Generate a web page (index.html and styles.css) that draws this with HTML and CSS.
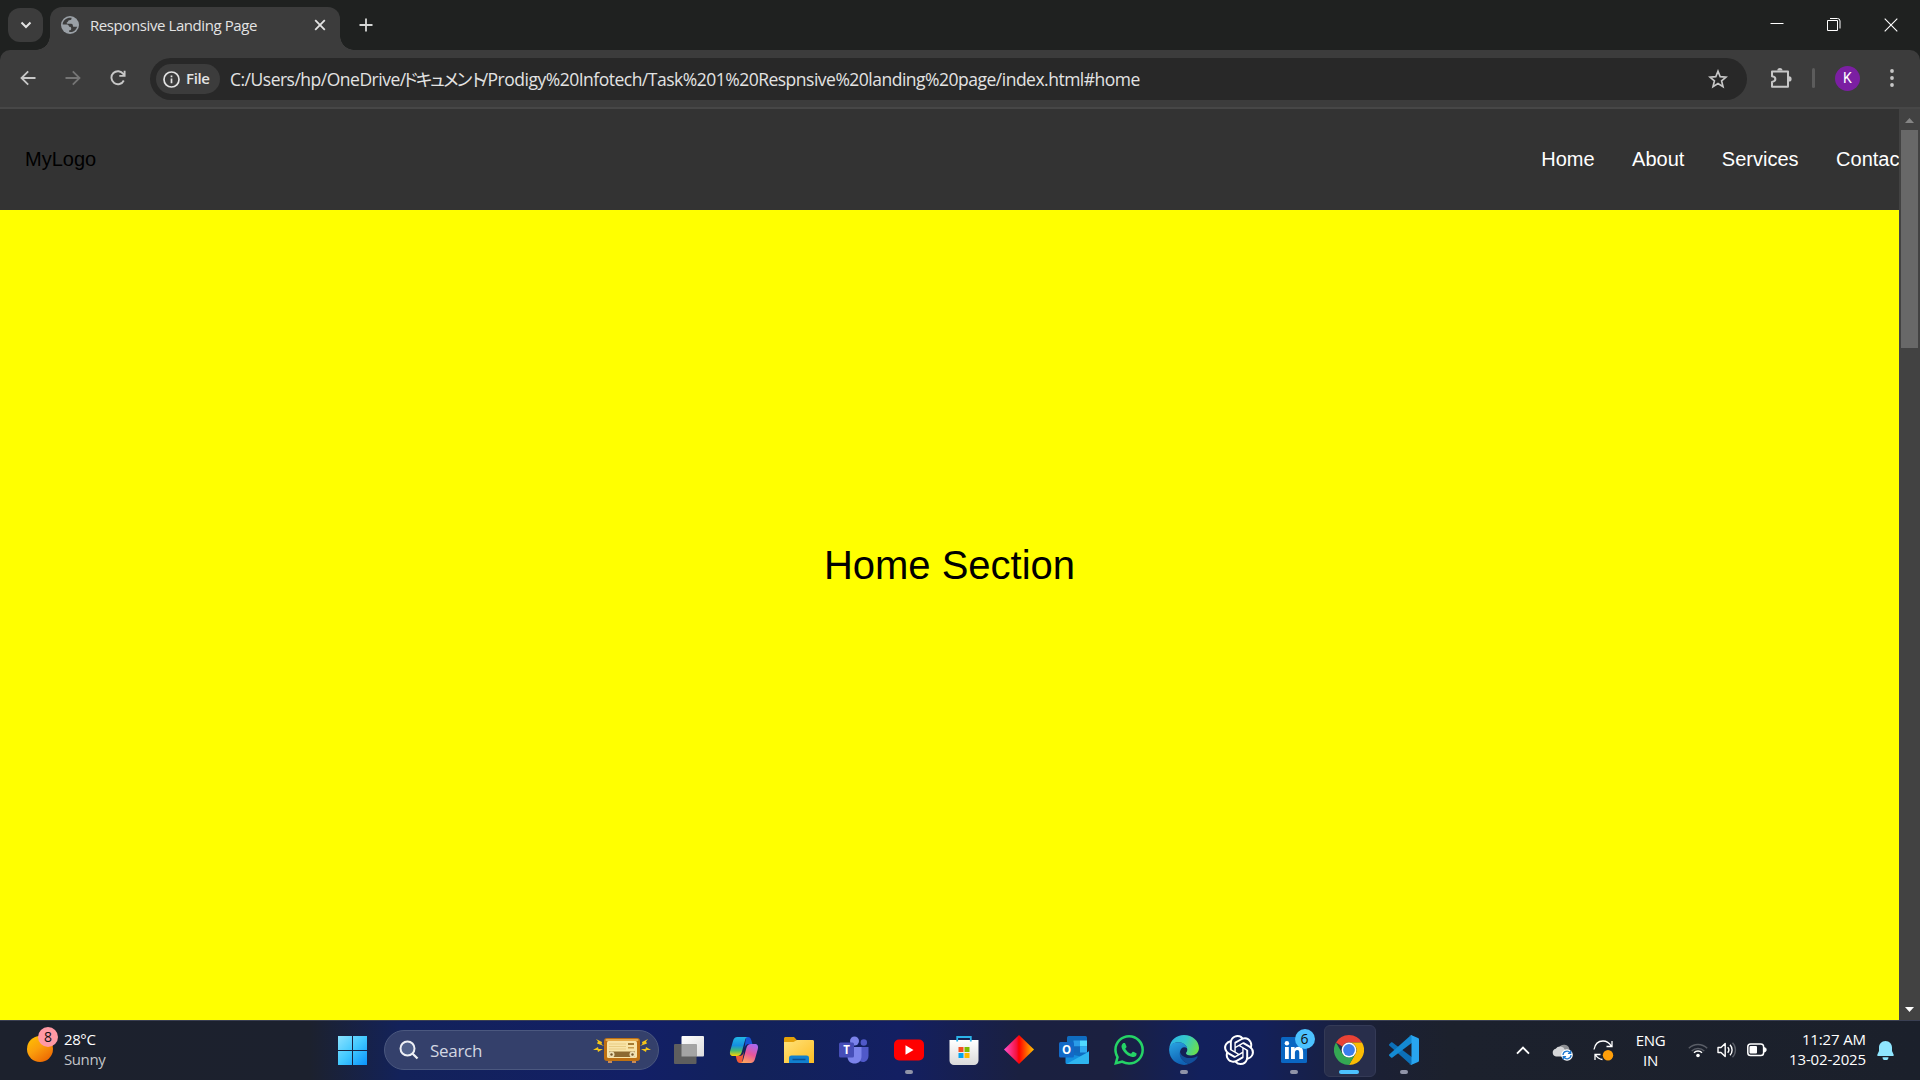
FILE: index.html
```
<!DOCTYPE html>
<html lang="en">
<head>
<meta charset="utf-8">
<title>Responsive Landing Page</title>
<link rel="stylesheet" href="styles.css">
</head>
<body>
<div class="tabstrip">
  <div class="tab-search"><svg width="12" height="8" viewBox="0 0 12 8"><path d="M1.5 1.5 6 6l4.500-4.500" fill="none" stroke="#e3e3e3" stroke-width="2"/></svg></div>
  <div class="tab">
    <svg class="globe" width="18" height="18" viewBox="0 0 18 18"><circle cx="9" cy="9" r="9" fill="#9aa0a6"/><path d="M10.500 1.800C10.800 3.600 9.800 4.200 8.300 4.300 6.900 4.400 7.200 6 6.300 6.300c-1 .3-.8 1.400.2 1.500h3.700c1.400 0 1.700 1 1.700 2.100 0 .8.900.8 1.700.8h2.600c-.6 2.200-2.300 4.200-4.500 5-1.200.4-2.400.5-3.500.3v-1.700c1.500 0 2-.5 2-1.800 0-1.300-1-1.700-2-1.700-.5-1.600-1.200-2.200-2.800-2.200H1.700C1.500 5.500 4 2.700 7 1.900c1.200-.3 2.400-.3 3.500-.1z" fill="#3c3c3c"/></svg>
    <span class="tab-title">Responsive Landing Page</span>
    <svg class="tab-close" width="12" height="12" viewBox="0 0 12 12"><path d="M1.200 1.200l9.600 9.600M10.800 1.200l-9.600 9.600" stroke="#e3e3e3" stroke-width="1.800"/></svg>
  </div>
  <svg class="tab-new" width="14" height="14" viewBox="0 0 14 14"><path d="M7 .5v13M.5 7h13" stroke="#d5d7d6" stroke-width="1.800"/></svg>
  <div class="window-buttons">
    <svg width="14" height="14" viewBox="0 0 14 14"><path d="M.5 5.500h13" stroke="#fff"/></svg>
    <svg width="14" height="14" viewBox="0 0 14 14"><path d="M.5 2.500h10v10H.5zM3 .5h7.500a2.500 2.500 0 0 1 2.500 2.500v7.500" fill="none" stroke="#fff"/></svg>
    <svg width="14" height="14" viewBox="0 0 14 14"><path d="M.7.7l12.600 12.600M13.300.7.7 13.300" stroke="#fff" stroke-width="1.100"/></svg>
  </div>
</div>

<div class="toolbar">
  <svg class="nav-icon" width="16" height="16" viewBox="0 0 16 16"><path d="M15.500 8H1.800M8.200 1.300 1.500 8l6.700 6.700" fill="none" stroke="#c7c7c7" stroke-width="1.800"/></svg>
  <svg class="nav-icon" width="16" height="16" viewBox="0 0 16 16"><path d="M.5 8h13.700M7.800 1.300 14.500 8l-6.700 6.700" fill="none" stroke="#757575" stroke-width="1.800"/></svg>
  <svg class="nav-icon" width="16" height="16" viewBox="0 0 16 16"><path d="M13.800 10.500A6.500 6.500 0 1 1 13.300 4l1 1.500M14.600.7v5.200H9.300" fill="none" stroke="#c7c7c7" stroke-width="1.900"/></svg>
  <div class="omnibox">
    <div class="chip">
      <svg width="17" height="17" viewBox="0 0 17 17"><circle cx="8.500" cy="8.500" r="7.500" fill="none" stroke="#e3e3e3" stroke-width="1.700"/><path d="M8.500 7.500v4.700M8.500 4.400v1.800" stroke="#e3e3e3" stroke-width="1.700"/></svg>
      <span>File</span>
    </div>
    <span class="url">C:/Users/hp/OneDrive/<span class="kana">ドキュメント</span>/Prodigy%20Infotech/Task%201%20Respnsive%20landing%20page/index.html#home</span>
    <svg class="star" width="20" height="20" viewBox="0 0 20 20"><path d="M10 2.200l2.200 5.500 5.900.4-4.500 3.800 1.400 5.700-5-3.100-5 3.100 1.400-5.700L1.900 8.100l5.900-.4z" fill="none" stroke="#c7c7c7" stroke-width="1.700"/></svg>
  </div>
  <svg class="ext" width="22" height="22" viewBox="0 0 22 22"><path d="M2 4.500h16v15.300H2v-4.900c4.500-.6 4.500-5 0-5.600z" fill="none" stroke="#c7c7c7" stroke-width="2" stroke-linejoin="round"/><path d="M7.300 3.500a2.600 2.600 0 0 1 5.200 0zM19 9.300a2.600 2.600 0 0 1 0 5.200z" fill="#c7c7c7"/></svg>
  <span class="separator"></span>
  <span class="avatar">K</span>
  <svg class="menu" width="4" height="18" viewBox="0 0 4 18"><g fill="#c7c7c7"><circle cx="2" cy="2" r="1.900"/><circle cx="2" cy="9" r="1.900"/><circle cx="2" cy="16" r="1.900"/></g></svg>
</div>

<div class="viewport">
  <div class="page">
    <header class="site-header">
      <div class="logo">MyLogo</div>
      <nav class="site-nav"><a>Home</a><a>About</a><a>Services</a><a>Contact</a></nav>
    </header>
    <section class="home">Home Section</section>
  </div>
  <div class="scrollbar">
    <svg class="arrow" width="9" height="5" viewBox="0 0 9 5"><path d="M0 5 4.500 0 9 5z" fill="#858585"/></svg>
    <div class="thumb"></div>
    <svg class="arrow" width="9" height="5" viewBox="0 0 9 5"><path d="M0 0h9L4.500 5z" fill="#fff"/></svg>
  </div>
</div>

<div class="taskbar">
  <div class="weather">
    <div class="sun"><span class="sun-badge">8</span></div>
    <div class="weather-text"><span>28°C</span><span class="dim">Sunny</span></div>
  </div>
  <svg class="start" width="29" height="29" viewBox="0 0 29 29"><defs><linearGradient id="win" x1="0" y1="0" x2="29" y2="29" gradientUnits="userSpaceOnUse"><stop stop-color="#8be2ff"/><stop offset=".5" stop-color="#41c8ff"/><stop offset="1" stop-color="#0a92fb"/></linearGradient></defs><path d="M0 0h14v14H0zM15 0h14v14H15zM0 15h14v14H0zM15 15h14v14H15z" fill="url(#win)"/></svg>
  <div class="search">
    <svg width="20" height="20" viewBox="0 0 20 20"><circle cx="8.500" cy="8.500" r="7" fill="#51618a" stroke="#eef0f5" stroke-width="2"/><path d="M13.700 13.700l4.800 4.800" stroke="#eef0f5" stroke-width="2.300"/></svg>
    <span class="search-label">Search</span>
    <svg class="radio" width="58" height="26" viewBox="0 0 58 26"><g fill="#f5c518"><path d="M3 2l6 3-.5 2L11 9 4 6.500l1-2zM0 13l5-3 .5 2L10 12l-5 3-.5-2zM55 2l-6 3 .5 2L47 9l7-2.500-1-2zM58 13l-5-3-.5 2-4.500 0 5 3 .5-2z"/></g><rect x="15" y="23" width="4" height="3" fill="#c88a58"/><rect x="39" y="23" width="4" height="3" fill="#c88a58"/><rect x="11" y="1" width="36" height="23" rx="3" fill="#bd7013"/><rect x="12.500" y="2" width="33" height="2" rx="1" fill="#e6ab4b"/><rect x="14" y="4" width="30" height="17" rx="1.500" fill="#f8e4a8"/><path d="M16 7h17M16 9.500h17M16 12h17" stroke="#e8cc84"/><rect x="35" y="6" width="6" height="2" fill="#a47b32"/><rect x="35" y="10" width="6" height="1.500" fill="#c99d4e"/><path d="M16 14.500h26V20H16z" fill="#8c6a32"/><circle cx="18.500" cy="17.500" r="3" fill="#eee0b6"/><circle cx="39.500" cy="17.500" r="3" fill="#eee0b6"/><circle cx="18.500" cy="17.500" r="1.200" fill="#76582b"/><circle cx="39.500" cy="17.500" r="1.200" fill="#76582b"/></svg>
  </div>
  <div class="apps">
    <div class="app"><svg viewBox="0 0 30 30"><defs><linearGradient id="tv" x1="0" y1="0" x2="1" y2="1"><stop stop-color="#fff"/><stop offset="1" stop-color="#dcdcdc"/></linearGradient></defs><rect x="7.500" y="1" width="22.500" height="20.500" rx="1" fill="url(#tv)"/><rect y="9" width="22.500" height="20" rx="1" fill="#5e5e5e"/><path d="M7.500 9h15v12.500h-15z" fill="#a4a4a4"/></svg></div>
    <div class="app"><svg viewBox="0 0 30 30"><defs><linearGradient id="ca" x1="0" y1="0" x2="0" y2="1"><stop stop-color="#22b7e5"/><stop offset=".45" stop-color="#158fe0"/><stop offset=".72" stop-color="#45bb72"/><stop offset="1" stop-color="#ffd400"/></linearGradient><linearGradient id="cb" x1=".7" y1="0" x2=".3" y2="1"><stop stop-color="#a768f0"/><stop offset=".5" stop-color="#e8569a"/><stop offset="1" stop-color="#ffa45c"/></linearGradient></defs><path d="M17 2h2c2 0 2.800 1.500 3.400 3.500l1 3.500H20c-3 0-3.500 1.500-4.500 4.500z" fill="#1554d8"/><path d="M13 28h-2c-2 0-2.800-1.500-3.400-3.500L6.800 21H10c3 0 4-1.500 5-4.500z" fill="#f05a38"/><path d="M8.500 2H19c-2 0-2.500 1.500-3.200 4l-3 11c-.8 2.700-2 4-5 4H4C1 21 .4 18.500 1.300 15.500L4 6c.8-2.700 2-4 4.500-4z" fill="url(#ca)"/><path d="M21.500 28H11c2 0 2.700-1.500 3.400-4l3-11c.8-2.700 2-4 4.600-4h4c3 0 3.500 2.500 2.700 5.500L26 24c-.8 2.700-2 4-4.500 4z" fill="url(#cb)"/></svg></div>
    <div class="app"><svg viewBox="0 0 30 30"><defs><linearGradient id="fo" x1="0" y1="0" x2="1" y2="1"><stop stop-color="#ffe27a"/><stop offset="1" stop-color="#fdbd23"/></linearGradient></defs><path d="M0 3.500C0 2.500.8 2 1.500 2H10l3 3.200V9H0z" fill="#e3a008"/><path d="M0 7h9.500L13 5h15.500c1 0 1.500.6 1.500 1.500V28H0z" fill="url(#fo)"/><path d="M5 28v-5c0-1.700 1-2.500 2.500-2.500h15c1.500 0 2.500.8 2.500 2.500v5z" fill="#1180cf"/><path d="M8.500 24.500h13" stroke="#0a4f91" stroke-width="1.500"/></svg></div>
    <div class="app"><svg viewBox="0 0 30 30"><circle cx="15.500" cy="6" r="4.500" fill="#7b83eb"/><circle cx="24.800" cy="7.500" r="3.200" fill="#5059c9"/><path d="M20 12h9.500v8.500c0 4-2.500 6.500-5.500 6.500-2 0-4-1-4-4z" fill="#5059c9"/><path d="M8.500 12h14v9c0 5-3 7.500-7 7.500s-7-2.500-7-7z" fill="#7b83eb"/><rect y="7.500" width="15" height="15" rx="1.500" fill="#464eb8"/><text x="7.500" y="19.200" text-anchor="middle" font-family="Open Sans,sans-serif" font-size="11.500" font-weight="700" fill="#fff">T</text></svg></div>
    <div class="app running"><svg viewBox="0 0 30 30"><rect y="4.500" width="30" height="21" rx="5" fill="#f00"/><path d="M11.500 10.200v9.600l8-4.800z" fill="#fff"/></svg></div>
    <div class="app"><svg viewBox="0 0 30 30"><defs><linearGradient id="st" x1="0" y1="0" x2="0" y2="1"><stop stop-color="#fff"/><stop offset="1" stop-color="#dadada"/></linearGradient></defs><path d="M.5 5h29v20.500a4.500 4.500 0 0 1-4.500 4.500H5a4.500 4.500 0 0 1-4.500-4.500z" fill="url(#st)"/><path d="M8.200 6.500V2h13.600v4.500" fill="none" stroke="#2bb3ea" stroke-width="1.800"/><path d="M9.500 12h5v5h-5z" fill="#f25022"/><path d="M15.500 12h5v5h-5z" fill="#7fba00"/><path d="M9.500 18h5v5h-5z" fill="#00a4ef"/><path d="M15.500 18h5v5h-5z" fill="#ffb900"/></svg></div>
    <div class="app"><svg viewBox="0 0 30 30"><defs><linearGradient id="di"><stop stop-color="#ff4fd0"/><stop offset=".42" stop-color="#f5123c"/><stop offset=".5" stop-color="#f00"/><stop offset="1" stop-color="#ffc400"/></linearGradient></defs><path d="M15 0l15 14.500L15 29 0 14.500z" fill="url(#di)"/></svg></div>
    <div class="app"><svg viewBox="0 0 30 30"><rect x="8" y="1" width="20" height="21" rx="1.500" fill="#0f6cc0"/><path d="M14.500 5.500H21v6h-6.500z" fill="#2a9ce8"/><path d="M21 5.500h7v6h-7z" fill="#50d9ff"/><path d="M14.500 11.500H21v6h-6.500z" fill="#1168bd"/><path d="M21 11.500h7v6h-7z" fill="#30aaf0"/><path d="M6.500 18l17 4L30 16v11.500a1.500 1.500 0 0 1-1.500 1.500H8a1.500 1.500 0 0 1-1.500-1.500z" fill="#1490df"/><path d="M30 16.500 7.500 29H28.500a1.500 1.500 0 0 0 1.500-1.500z" fill="#2fb5ef"/><rect y="7" width="15" height="15.500" rx="1.500" fill="#1269c7"/><text x="7.500" y="19" text-anchor="middle" font-family="Open Sans,sans-serif" font-size="11.500" font-weight="700" fill="#fff">O</text></svg></div>
    <div class="app"><svg viewBox="0 0 24 24"><path fill="#25d366" d="M17.472 14.382c-.297-.149-1.758-.867-2.030-.967-.273-.099-.471-.148-.670.150-.197.297-.767.966-.940 1.164-.173.199-.347.223-.644.075-.297-.150-1.255-.463-2.390-1.475-.883-.788-1.480-1.761-1.653-2.059-.173-.297-.018-.458.130-.606.134-.133.298-.347.446-.520.149-.174.198-.298.298-.497.099-.198.050-.371-.025-.520-.075-.149-.669-1.612-.916-2.207-.242-.579-.487-.500-.669-.510-.173-.008-.371-.010-.570-.010-.198 0-.520.074-.792.372-.272.297-1.040 1.016-1.040 2.479 0 1.462 1.065 2.875 1.213 3.074.149.198 2.096 3.200 5.077 4.487.709.306 1.262.489 1.694.625.712.227 1.360.195 1.871.118.571-.085 1.758-.719 2.006-1.413.248-.694.248-1.289.173-1.413-.074-.124-.272-.198-.570-.347m-5.421 7.403h-.004a9.870 9.870 0 0 1-5.031-1.378l-.361-.214-3.741.982.998-3.648-.235-.374a9.860 9.860 0 0 1-1.510-5.260c.001-5.450 4.436-9.884 9.888-9.884 2.640 0 5.122 1.030 6.988 2.898a9.825 9.825 0 0 1 2.893 6.994c-.003 5.450-4.437 9.884-9.885 9.884m8.413-18.297A11.815 11.815 0 0 0 12.050 0C5.495 0 .160 5.335.157 11.892c0 2.096.547 4.142 1.588 5.945L.057 24l6.305-1.654a11.882 11.882 0 0 0 5.683 1.448h.005c6.554 0 11.890-5.335 11.893-11.893a11.821 11.821 0 0 0-3.480-8.413z"/></svg></div>
    <div class="app running"><svg viewBox="0 0 30 30"><defs><linearGradient id="ea" x1="0" y1=".3" x2="1" y2=".6"><stop stop-color="#2cb4e8"/><stop offset=".5" stop-color="#35c8c8"/><stop offset="1" stop-color="#6be04a"/></linearGradient><linearGradient id="eb" x1="0" y1="0" x2=".4" y2="1"><stop stop-color="#2aa6e4"/><stop offset="1" stop-color="#0f62b4"/></linearGradient></defs><path d="M.3 13C1.300 5 7.500 0 15 0c8.500 0 15 6 15 13 0 4.500-3.500 7.500-8 7.500-3.500 0-5-1.300-5-2.300 0-.7 1.300-1.300 1.300-3.400C18.300 10.500 14 7.300 9 7.300c-4 0-7 2.300-8.700 5.700z" fill="url(#ea)"/><path d="M.1 15C0 10.500 4 7 9.500 7.200c5 .1 8.300 3 8.800 6.300-3-2.600-6.800-1-7.300 3.500-.5 6.500 5 11.500 9.500 11.800C12 32.500.3 26.500.1 15z" fill="url(#eb)"/><path d="M11 16.500c-2 7 5.500 12 9.500 12.300 3.700-1.300 6.600-3.700 8-6.500.4-.8-.2-1.200-.9-.8C20.500 25 12 22.500 11 16.500z" fill="#124f9b"/></svg></div>
    <div class="app"><svg viewBox="0 0 24 24"><path fill="#fff" d="M22.282 9.821a5.985 5.985 0 0 0-.516-4.911 6.046 6.046 0 0 0-6.510-2.900A6.065 6.065 0 0 0 4.981 4.182a5.985 5.985 0 0 0-3.998 2.900 6.046 6.046 0 0 0 .743 7.097 5.980 5.980 0 0 0 .511 4.911 6.051 6.051 0 0 0 6.515 2.900A5.985 5.985 0 0 0 13.260 24a6.056 6.056 0 0 0 5.772-4.206 5.990 5.990 0 0 0 3.998-2.900 6.056 6.056 0 0 0-.748-7.073zM13.260 22.430a4.476 4.476 0 0 1-2.876-1.041l.142-.080 4.778-2.758a.795.795 0 0 0 .393-.681v-6.737l2.020 1.169a.071.071 0 0 1 .038.052v5.583a4.504 4.504 0 0 1-4.495 4.493zM3.600 18.304a4.471 4.471 0 0 1-.535-3.014l.142.085 4.783 2.759a.771.771 0 0 0 .781 0l5.843-3.369v2.332a.080.080 0 0 1-.033.062L9.740 19.950a4.499 4.499 0 0 1-6.140-1.646zM2.341 7.896a4.485 4.485 0 0 1 2.365-1.973V11.600a.766.766 0 0 0 .388.677l5.815 3.354-2.021 1.169a.076.076 0 0 1-.071 0l-4.830-2.787A4.504 4.504 0 0 1 2.341 7.872zm16.596 3.856l-5.833-3.387L15.119 7.200a.076.076 0 0 1 .071 0l4.830 2.791a4.494 4.494 0 0 1-.676 8.105v-5.678a.790.790 0 0 0-.407-.667zm2.011-3.024l-.142-.085-4.774-2.782a.776.776 0 0 0-.785 0L9.409 9.230V6.897a.066.066 0 0 1 .028-.061l4.830-2.787a4.499 4.499 0 0 1 6.681 4.660zM8.307 12.863l-2.020-1.164a.080.080 0 0 1-.038-.057V6.074a4.499 4.499 0 0 1 7.376-3.453l-.142.080-4.778 2.758a.795.795 0 0 0-.393.682zm1.097-2.365L12.006 8.998l2.607 1.500v2.999l-2.597 1.500-2.607-1.500z"/></svg></div>
    <div class="app running"><svg viewBox="0 0 30 30"><rect x="2" y="2" width="26" height="26" rx="1.500" fill="#0a66c2"/><path d="M6 12h3.800v12H6zM12 12h3.600v1.700c.7-1.200 2-2 3.800-2 3.800 0 4.700 2.300 4.700 5.700V24h-3.800v-5.900c0-1.600-.1-3.100-2-3.100-2 0-2.400 1.500-2.400 3.100V24H12z" fill="#fff"/><circle cx="7.900" cy="8.200" r="2.200" fill="#fff"/></svg><span class="app-badge">6</span></div>
    <div class="app running active"><svg viewBox="0 0 30 30"><path d="M15 0a15 15 0 0 1 13 7.500H15A7.500 7.500 0 0 0 8.300 11.600L2 7.500A15 15 0 0 1 15 0z" fill="#e94235"/><path d="M28 7.500A15 15 0 0 1 15 30l6.500-11.200A7.500 7.500 0 0 0 15 7.500z" fill="#fbbc04"/><path d="M15 30A15 15 0 0 1 2 7.500l6.500 11.250A7.500 7.500 0 0 0 21.500 18.750z" fill="#34a853"/><circle cx="15" cy="15" r="7.400" fill="#fff"/><circle cx="15" cy="15" r="5.900" fill="#3b7ded"/></svg></div>
    <div class="app running"><svg viewBox="0 0 30 30"><path d="M0 9.500l2-2c.5-.5 1-.4 1.500 0L23 22.300V29.500L21 29 .2 10.500C-.1 10.100-.1 9.800 0 9.500z" fill="#0c70b8"/><path d="M0 20.500l2 2c.5.500 1 .4 1.500 0L23 7.700V.5L21 1 .2 19.500c-.3.400-.3.700-.2 1z" fill="#148ad2"/><path d="M22 0l7 3c.7.300 1 .8 1 1.500v21c0 .7-.3 1.200-1 1.500l-7 3c-.8.200-1.500 0-2-.5 1.200.8 2.500 0 2.500-1.500V2c0-1.500-1.500-2.200-2.500-1.500.5-.5 1.200-.7 2-.5z" fill="#28a5f0"/></svg></div>
  </div>
  <div class="tray">
    <svg class="caret" width="14" height="9" viewBox="0 0 14 9"><path d="M1 7.700l6-6 6 6" fill="none" stroke="#fff" stroke-width="1.900"/></svg>
    <svg class="cloud" width="22" height="18" viewBox="0 0 22 18"><path d="M7 5a5.500 5.500 0 0 1 10.500 1.500L18 10H8z" fill="#8d8f93"/><path d="M4 13.500a4 4 0 0 1-.3-7.800A5.300 5.300 0 0 1 13 7l3 6.500z" fill="#d5d6d8"/><circle cx="15" cy="12" r="5.800" fill="#fff"/><path d="M11 12a4 4 0 0 1 7.200-2.200M19 12a4 4 0 0 1-7.200 2.200M18.700 7.500v2.800h-2.800M11.300 16.500v-2.800h2.800" fill="none" stroke="#1d78d0" stroke-width="1.300"/></svg>
    <svg class="update" width="21" height="21" viewBox="0 0 21 21"><path d="M1 9.500C2 4 5.500 1 10 1c4 0 6.500 2 8.500 5.300M19 1v5.500h-5.500M2 20v-5.500h5.500M2.500 15c1.500 2.500 3.500 4 7 4.500" fill="none" stroke="#fff" stroke-width="1.300"/><circle cx="15" cy="15.200" r="5.200" fill="#ff9f0a"/></svg>
    <div class="lang"><span>ENG</span><span>IN</span></div>
    <svg class="wifi" width="20" height="16" viewBox="0 0 20 16"><path d="M.8 6.300a13 13 0 0 1 18.400 0M3.700 9a9 9 0 0 1 12.600 0" fill="none" stroke="#595d66" stroke-width="1.400"/><path d="M6 10.700a5.800 5.800 0 0 1 8 0" fill="none" stroke="#fff" stroke-width="1.500"/><circle cx="10" cy="13.500" r="1.800" fill="#fff"/></svg>
    <svg class="volume" width="20" height="16" viewBox="0 0 20 16"><path d="M1 5.500h3L8.200 1.500v13L4 10.500H1z" fill="none" stroke="#fff" stroke-width="1.400" stroke-linejoin="round"/><path d="M10.700 5.300a4 4 0 0 1 0 5.400M13 2.800a7.500 7.500 0 0 1 0 10.400" fill="none" stroke="#fff" stroke-width="1.400"/><path d="M15.500.8a10.300 10.300 0 0 1 0 14.400" fill="none" stroke="#595d66" stroke-width="1.400"/></svg>
    <svg class="battery" width="20" height="14" viewBox="0 0 20 14"><rect x=".8" y="1" width="15.800" height="11.500" rx="2.800" fill="none" stroke="#fff" stroke-width="1.500"/><rect x="2.500" y="3" width="7.500" height="7.500" rx="1" fill="#fff"/><path d="M17.500 4.500c2.200.3 2.200 4.300 0 4.600z" fill="#fff" stroke="#fff"/></svg>
    <div class="clock"><span>11:27 AM</span><span>13-02-2025</span></div>
    <svg class="bell" width="17" height="19" viewBox="0 0 17 19"><path d="M8.500 0C4.500 0 2 3 2 6.500V10L.4 13.600C.1 14.500.5 15 1.300 15h14.400c.8 0 1.200-.5.900-1.400L15 10V6.500C15 3 12.500 0 8.500 0zM5.500 16.300a3 3 0 0 0 6 0z" fill="#8fe6ff"/></svg>
  </div>
</div>
</body>
</html>
```
FILE: styles.css
```
* { box-sizing: border-box; }
body {
  margin: 0;
  width: 1920px;
  height: 1080px;
  overflow: hidden;
  display: flex;
  flex-direction: column;
  background: #1f2120;
  font-family: "Open Sans", "Noto Sans", "Noto Sans CJK JP", sans-serif;
}
svg { display: block; flex: none; }

.tabstrip { height: 50px; flex: none; display: flex; padding-left: 8px; background: #1f2120; }
.tab-search {
  width: 35px; height: 34px; margin-top: 8px; border-radius: 12px;
  background: #3c3c3c; display: flex; align-items: center; justify-content: center;
}
.tab {
  position: relative; width: 290px; height: 43px; margin: 7px 0 0 7px; padding: 0 14px 7px 11px;
  border-radius: 12px 12px 0 0; background: #3c3c3c; display: flex; align-items: center;
}
.tab::before, .tab::after { content: ""; position: absolute; bottom: 0; width: 14px; height: 14px; }
.tab::before { left: -14px; background: radial-gradient(circle at 0 0, transparent 13.500px, #3c3c3c 14px); }
.tab::after { right: -14px; background: radial-gradient(circle at 100% 0, transparent 13.500px, #3c3c3c 14px); }
.tab-title { margin-left: 11px; font-size: 15px; letter-spacing: -0.410px; color: #e3e3e3; white-space: nowrap; }
.tab-close { margin-left: auto; }
.tab-new { margin: 18px 0 0 19px; }
.window-buttons { display: flex; gap: 43px; margin: 18px 22px 0 auto; }

.toolbar {
  height: 59px; flex: none; display: flex; align-items: center; padding: 0 22px 1px 20px;
  border-bottom: 2px solid #474747; border-radius: 10px 10px 0 0; background: #3c3c3c;
}
.nav-icon { margin-right: 29px; }
.nav-icon:nth-child(3) { margin-right: 24px; }
.omnibox {
  width: 1597px; height: 42px; margin-top: 2px; padding: 0 19px 0 6px; border-radius: 21px;
  background: #282828; display: flex; align-items: center;
}
.chip {
  width: 64px; height: 30px; padding-left: 7px; border-radius: 15px; background: #3c3c3c;
  display: flex; align-items: center; gap: 6px; font-size: 15px; font-weight: 600; letter-spacing: -0.350px; color: #e3e3e3;
}
.chip span, .url { position: relative; top: -1px; }
.url { margin-left: 10px; font-size: 17.500px; letter-spacing: -0.500px; color: #e3e3e3; white-space: nowrap; }
.kana { margin: 0 -1px 0 -4px; font-family: "Noto Sans CJK JP", sans-serif; letter-spacing: -4px; }
.star { margin-left: auto; }
.ext { margin-left: 23px; }
.separator { width: 3px; height: 20px; margin-left: 20px; border-radius: 2px; background: #5c5c5c; }
.avatar {
  width: 25px; height: 25px; margin-left: 20px; border-radius: 50%; background: #7b1fa2; color: #fff;
  font: 14px/25px Roboto, sans-serif; text-align: center;
}
.menu { margin-left: 30px; }

.viewport { height: 911px; flex: none; display: flex; }
.page { flex: 1; min-width: 0; overflow: hidden; display: flex; flex-direction: column; font: 20px "Liberation Sans", Arial, sans-serif; }
.site-header { height: 101px; flex: none; padding: 0 0 0 25px; display: flex; align-items: center; justify-content: space-between; background: #333; color: #000; }
.site-nav { display: flex; gap: 37.500px; margin-right: -6px; color: #fff; }
.home { flex: 1; display: flex; align-items: center; justify-content: center; padding-bottom: 100px; background: #ff0; font-size: 40px; color: #000; }
.scrollbar { width: 21px; display: flex; flex-direction: column; align-items: center; padding: 9px 0 8px; background: #424242; }
.thumb { width: 17px; height: 218px; margin: 7px 0 auto; background: #686868; }

.taskbar {
  height: 60px; flex: none; display: flex; align-items: center; box-shadow: inset 0 1px #3a3f52; color: #fff;
  background: linear-gradient(90deg, #1c212d 0, #1c212e 310px, #13225a 400px, #121f66 640px, #12225a 750px, #131f62 900px, #1a2040 1020px, #1b2040 1110px, #12205c 1200px, #13205a 1260px, #1b2034 1380px, #1c212d 1450px, #1b202b 100%);
}
.weather { width: 338px; padding-left: 27px; display: flex; align-items: center; }
.sun { position: relative; width: 26px; height: 26px; margin-top: -2px; border-radius: 50%; background: linear-gradient(145deg, #ffc400, #fb9e0c 45%, #e85a00); }
.sun-badge, .app-badge { position: absolute; width: 20px; height: 20px; border-radius: 50%; color: #111; font-size: 14px; line-height: 20px; text-align: center; }
.sun-badge { left: 11px; top: -9px; background: #ff99a4; }
.weather-text { margin: -3px 0 0 11px; display: flex; flex-direction: column; font-size: 15px; line-height: 20px; letter-spacing: -0.400px; }
.dim { color: #c3c5c9; }
.search {
  width: 275px; height: 40px; margin-left: 17px; padding: 0 7px 0 14px; border: 1px solid #4b587f; border-radius: 20px;
  background: #34406b; display: flex; align-items: center;
}
.search-label { margin-left: 11px; font-size: 17px; letter-spacing: -0.300px; color: #d3d7e2; }
.radio { margin-left: auto; }
.apps { display: grid; grid-template-columns: repeat(14, 55px); margin-left: 2.500px; height: 60px; }
.app { position: relative; display: flex; align-items: center; justify-content: center; }
.app > svg { position: relative; width: 30px; height: 30px; }
.running::after { content: ""; position: absolute; left: 23.500px; top: 50px; width: 8px; height: 4px; border-radius: 2px; background: #9094a8; }
.active::before { content: ""; position: absolute; left: 2px; top: 5px; width: 50px; height: 50px; border: 1px solid #343a56; border-radius: 6px; background: #282e4b; }
.active::after { left: 17.500px; width: 20px; background: #4cc2ff; }
.app-badge { left: 28px; top: 9px; background: #4cc2ff; }

.tray { flex: 1; display: flex; align-items: center; padding-right: 26px; }
.caret { margin-left: 84px; }
.cloud { margin-left: 22px; margin-top: 3px; }
.update { margin-left: 19px; }
.lang, .clock { display: flex; flex-direction: column; margin-top: -3px; font-size: 15px; line-height: 20px; letter-spacing: -0.300px; white-space: nowrap; }
.lang { width: 40px; margin: -1px 0 0 17px; align-items: center; }
.wifi { margin-left: 17px; }
.volume { margin-left: 9px; }
.battery { margin-left: 10px; }
.clock { margin-left: auto; align-items: flex-end; letter-spacing: -0.130px; }
.bell { margin-left: 11px; }
```
